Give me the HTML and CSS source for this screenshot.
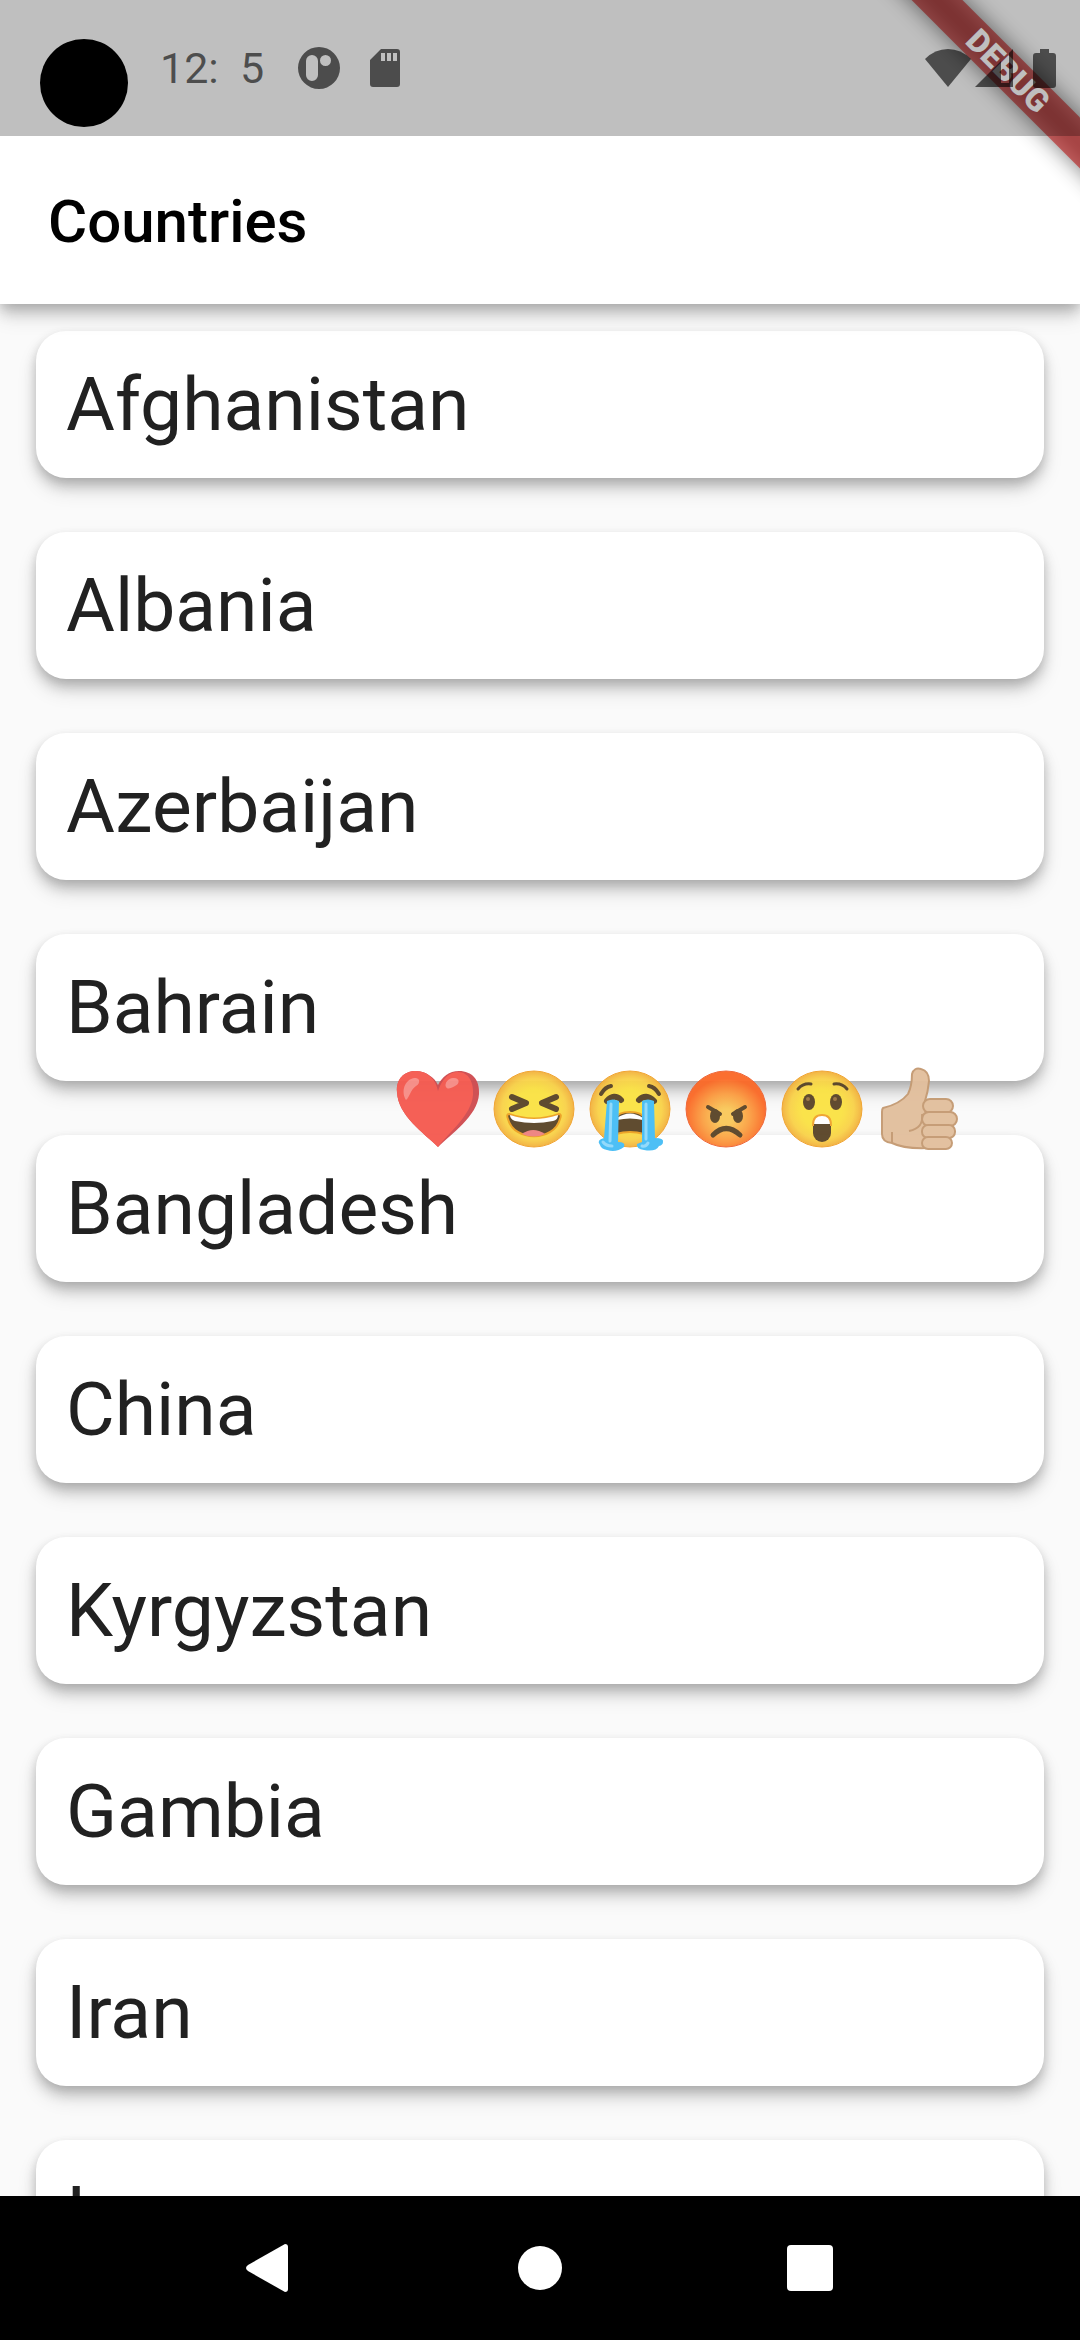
FILE: index.html
```html
<!DOCTYPE html>
<html lang="en">
<head>
<meta charset="utf-8">
<meta name="viewport" content="width=device-width, initial-scale=1">
<title>Countries</title>
<link rel="stylesheet" href="styles.css">
</head>
<body>
<div class="screen">
  <div class="debug-corner"><span class="debug-ribbon">DEBUG</span></div>

  <div class="status-bar">
    <div class="status-group">
      <span class="camera"></span>
      <span class="clock">12:  5</span>
      <svg class="app-icon" width="42" height="42" viewBox="0 0 42 42" aria-hidden="true">
        <path fill-rule="evenodd" d="M21 0a21 21 0 1 0 0 42a21 21 0 1 0 0-42zM14 8a6 6 0 0 1 6 6v14a6 6 0 0 1-12 0V14a6 6 0 0 1 6-6zM27.500 8a5.500 5.500 0 1 1 0 11a5.500 5.500 0 1 1 0-11z"/>
      </svg>
      <svg class="sd-icon" width="30" height="38" viewBox="0 0 30 38" aria-hidden="true">
        <path fill-rule="evenodd" d="M11 0H27a3 3 0 0 1 3 3V35a3 3 0 0 1-3 3H3a3 3 0 0 1-3-3V11zM11 4v8h4V4zM17 4v8h4V4zM23 4v8h4V4z"/>
      </svg>
    </div>
    <div class="status-group status-right">
      <svg width="46" height="38" viewBox="0 0 46 38" aria-hidden="true"><path d="M0 10Q10 0 23 0T46 10L23 38z"/></svg>
      <svg width="38" height="38" viewBox="0 0 38 38" aria-hidden="true"><path fill-rule="evenodd" d="M38 0V38H0zM26 12V34H34V4z"/></svg>
      <svg class="battery" width="23" height="39" viewBox="0 0 23 39" aria-hidden="true"><path d="M7 0h9v4h4a3 3 0 0 1 3 3v29a3 3 0 0 1-3 3H3a3 3 0 0 1-3-3V7a3 3 0 0 1 3-3h4z"/></svg>
    </div>
  </div>

  <header class="app-bar"><h1>Countries</h1></header>

  <main class="content">
    <ul class="countries">
      <li class="card">Afghanistan</li>
      <li class="card">Albania</li>
      <li class="card">Azerbaijan</li>
      <li class="card">Bahrain</li>
      <li class="card">Bangladesh</li>
      <li class="card">China</li>
      <li class="card">Kyrgyzstan</li>
      <li class="card">Gambia</li>
      <li class="card">Iran</li>
      <li class="card">Iraq</li>
    </ul>

    <div class="reactions">
      <svg width="0" height="0" class="defs" aria-hidden="true">
        <defs>
          <radialGradient id="yellow"><stop offset=".5" stop-color="#fbe344"/><stop offset=".8" stop-color="#f9d24a"/><stop offset="1" stop-color="#f2b13f"/></radialGradient>
          <radialGradient id="orange" cy=".6"><stop offset=".2" stop-color="#f9c95a"/><stop offset=".6" stop-color="#fb9f43"/><stop offset="1" stop-color="#fb6a28"/></radialGradient>
        </defs>
      </svg>
      <button class="reaction" aria-label="Love">
        <svg viewBox="0 0 84 84"><path fill="#cf4c50" d="M42 81C28 67 2 50 1 26C0 13 8 5 20 5C30 5 39 12 42 19C46 11 53 5 63 5C76 5 84 14 83 28C82 50 54 69 42 81z"/><path fill="#f55a50" d="M42 81C28 67 2 50 1 26C0 13 8 5 20 5C32 5 40 14 42 25C46 13 53 6 62 6C73 6 78 17 77 29C75 50 53 66 42 81z"/><path fill="#f88e88" d="M10 34C5 26 8 14 18 12C24 11 25 17 20 20C14 24 14 31 10 34zM50 21C48 17 53 11 58 12C64 12 64 18 59 20C55 22 52 24 50 21z"/></svg>
      </button>
      <button class="reaction" aria-label="Laugh">
        <svg viewBox="0 0 84 84"><ellipse cx="42" cy="43" rx="40" ry="38" fill="url(#yellow)" stroke="#f0a22c"/><path d="M20 31L34 37L20 43M64 31L50 37L64 43" fill="none" stroke="#5a4528" stroke-width="6" stroke-linecap="round" stroke-linejoin="round"/><path fill="#5a4528" stroke="#eda122" stroke-width="2" d="M17 48Q42 57 67 48Q70 48 68 53C62 76 22 76 16 53Q14 48 17 48z"/><path fill="#fff" d="M18 49Q42 57 66 49Q66 54 61 55Q42 59 23 55Q18 53 18 49z"/><path fill="#ee8380" d="M30 68Q41 60 53 68Q42 73 30 68z"/></svg>
      </button>
      <button class="reaction" aria-label="Cry">
        <svg viewBox="0 0 84 84"><ellipse cx="42" cy="43" rx="40" ry="38" fill="url(#yellow)" stroke="#f0a22c"/><path fill="#5a4528" stroke="#eda122" stroke-width="2" d="M28 68V52Q30 46 42 46Q54 46 56 52V68Q42 64 28 68z"/><path fill="#fff" d="M29 52Q42 43 55 52V54Q42 51 29 54z"/><path d="M19 35Q26 27 33 34M51 34Q58 27 66 35" fill="none" stroke="#5a4528" stroke-width="6" stroke-linecap="round"/><path d="M13 28Q17 21 23 20M61 20Q67 21 71 28" fill="none" stroke="#5a4528" stroke-width="4" stroke-linecap="round"/><path fill="#46bdf5" d="M19 35Q25 32 31 35L30 76Q38 76 36 81Q28 87 19 84Q13 83 12 79Q8 74 16 72zM54 35Q60 32 66 35L67 72Q76 72 75 76Q75 79 71 80Q68 86 56 84Q48 83 49 78L54 76z"/><path d="M23 38L22 75M58 38L58 73M15 76Q18 80 24 80M54 80Q58 81 60 77" fill="none" stroke="#8fd9fb" stroke-width="3" stroke-linecap="round"/></svg>
      </button>
      <button class="reaction" aria-label="Angry">
        <svg viewBox="0 0 84 84"><ellipse cx="42" cy="43" rx="40" ry="38" fill="url(#orange)" stroke="#ee6334"/><ellipse cx="31" cy="50" rx="5" ry="7" fill="#5a4528"/><ellipse cx="54" cy="50" rx="5" ry="7" fill="#5a4528"/><path fill="none" stroke="#5a4528" stroke-width="4" stroke-linecap="round" d="M24 41L36 48M61 41L49 48"/><path d="M29 69Q42 56 56 69" fill="none" stroke="#5a4528" stroke-width="5" stroke-linecap="round"/></svg>
      </button>
      <button class="reaction" aria-label="Wow">
        <svg viewBox="0 0 84 84"><ellipse cx="42" cy="43" rx="40" ry="38" fill="url(#yellow)" stroke="#f0a22c"/><ellipse cx="29" cy="36" rx="6" ry="8" fill="#5a4528"/><ellipse cx="56" cy="36" rx="6" ry="8" fill="#5a4528"/><circle cx="28" cy="33" r="2" fill="#9a7444"/><circle cx="55" cy="33" r="2" fill="#9a7444"/><path d="M18 23Q23 17 31 18M54 18Q62 17 67 23" fill="none" stroke="#5a4528" stroke-width="3" stroke-linecap="round"/><rect x="33" y="49" width="18" height="27" rx="9" fill="#5a4528"/><path fill="#fff" stroke="#f0a22c" stroke-width="2" d="M33 59Q33 49 42 49T51 59z"/><path fill="#5a4528" d="M34 58H50V66H34z"/></svg>
      </button>
      <button class="reaction" aria-label="Like">
        <svg viewBox="0 0 84 84"><g fill="#e2bf9d" stroke="#c49a72" stroke-width="2" stroke-linejoin="round"><path d="M7 42Q24 38 32 28Q36 20 36 8Q38 1 45 3Q53 5 53 15Q52 26 49 35L52 82Q28 83 16 77Q6 76 6 68V46Q6 43 7 42z"/><rect x="47" y="33" width="30" height="14" rx="7"/><rect x="46" y="46" width="35" height="14" rx="7"/><rect x="46" y="59" width="33" height="13" rx="6"/><rect x="46" y="71" width="30" height="12" rx="6"/><path fill="none" d="M46 48Q48 62 33 65M16 77V66"/></g></svg>
      </button>
    </div>
  </main>

  <nav class="nav-bar">
    <button aria-label="Back"><svg width="48" height="48" viewBox="0 0 48 48"><path d="M39 0Q42 0 42 3V45Q42 48 39 48L2 27Q-2 24 2 21z"/></svg></button>
    <button aria-label="Home"><svg width="48" height="48" viewBox="0 0 48 48"><circle cx="24" cy="24" r="22"/></svg></button>
    <button aria-label="Recent apps"><svg width="48" height="48" viewBox="0 0 48 48"><rect x="1" y="1" width="46" height="46" rx="4"/></svg></button>
  </nav>
</div>
</body>
</html>
```
FILE: styles.css
```css
* { box-sizing: border-box; }

body {
  margin: 0;
  font-family: Roboto, "Liberation Sans", sans-serif;
  background: #fafafa;
  color: #212121;
}

button {
  padding: 0;
  border: 0;
  background: none;
}

svg {
  display: block;
  overflow: visible;
}

.screen {
  position: relative;
  display: flex;
  flex-direction: column;
  height: 100vh;
  overflow: hidden;
}

/* Status bar */
.status-bar {
  position: relative;
  z-index: 4;
  display: flex;
  justify-content: space-between;
  flex: none;
  height: 136px;
  padding: 0 24px 0 40px;
  background: rgba(0, 0, 0, .25);
}

.status-group {
  display: flex;
  align-items: center;
  height: 136px;
  fill: rgba(0, 0, 0, .6);
}

.camera {
  width: 88px;
  height: 88px;
  margin: 30px 32px 0 0;
  border-radius: 50%;
  background: #000;
}

.clock {
  color: rgba(0, 0, 0, .6);
  font-size: 43px;
  white-space: pre;
}

.app-icon { margin-left: 34px; }
.sd-icon { margin-left: 30px; }
.status-right { gap: 4px; }
.battery { margin-left: 16px; }

/* Debug ribbon */
.debug-corner {
  position: absolute;
  z-index: 3;
  top: 0;
  right: 0;
  width: 260px;
  height: 260px;
  overflow: hidden;
}

.debug-ribbon {
  position: absolute;
  top: 53px;
  right: -88px;
  width: 320px;
  color: #fff;
  font-size: 32px;
  font-weight: 900;
  line-height: 36px;
  text-align: center;
  transform: rotate(45deg);
}

.debug-ribbon::before,
.debug-ribbon::after {
  content: "";
  position: absolute;
  z-index: -1;
  inset: 0;
}

.debug-ribbon::before {
  background: rgba(0, 0, 0, .5);
  filter: blur(11px);
}

.debug-ribbon::after { background: rgba(183, 28, 28, .63); }

/* App bar */
.app-bar {
  position: relative;
  z-index: 2;
  display: flex;
  align-items: center;
  flex: none;
  height: 168px;
  padding: 4px 48px 0;
  background: #fff;
  color: #000;
  box-shadow: 0 8px 14px -1px rgba(0, 0, 0, .2), 0 12px 20px rgba(0, 0, 0, .12), 0 3px 10px rgba(0, 0, 0, .06);
}

.app-bar::before {
  content: "";
  position: absolute;
  inset: -136px 0 100%;
  background: #fff;
}

.app-bar h1 {
  margin: 0;
  font-size: 60px;
  font-weight: 500;
  line-height: 68px;
}

/* Country list */
.content {
  position: relative;
  flex: 1;
  min-height: 0;
  overflow: hidden;
}

.countries {
  display: flex;
  flex-direction: column;
  gap: 54px;
  margin: 0;
  padding: 27px 36px;
  list-style: none;
}

.card {
  flex: none;
  height: 147px;
  padding: 0 30px;
  border-radius: 30px;
  background: #fff;
  font-size: 75px;
  line-height: 147px;
  box-shadow: 0 8px 14px -1px rgba(0, 0, 0, .2), 0 12px 20px rgba(0, 0, 0, .12), 0 3px 10px rgba(0, 0, 0, .06);
}

/* Floating reaction picker */
.reactions {
  position: absolute;
  top: 762px;
  right: 120px;
  display: flex;
  gap: 12px;
  opacity: .96;
}

.defs { position: absolute; }

.reaction {
  width: 84px;
  height: 84px;
}

/* System navigation */
.nav-bar {
  position: relative;
  display: flex;
  justify-content: center;
  align-items: center;
  gap: 222px;
  flex: none;
  height: 144px;
  background: #000;
  fill: #fff;
}
```
